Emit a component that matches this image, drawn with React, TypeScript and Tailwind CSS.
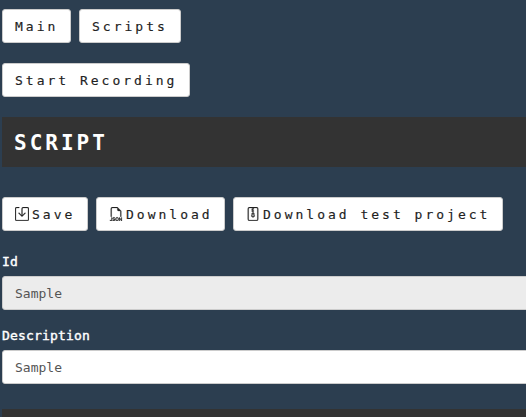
import type { ReactNode } from "react";
import { BsSave, BsFiletypeJson, BsFileZip } from "react-icons/bs";

function Button({ width, icon, children }: { width: string; icon?: ReactNode; children: ReactNode }) {
  return (
    <button
      className={`flex h-[34px] shrink-0 items-center rounded-[3px] border border-[#ccc] bg-white px-3 text-[13px] tracking-[3px] whitespace-pre text-[#222] ${width}`}
    >
      {icon}
      <span className="pt-[2px] [-webkit-text-stroke:0.15px_#222]">{children}</span>
    </button>
  );
}

function Field({ label, value, disabled = false }: { label: string; value: string; disabled?: boolean }) {
  return (
    <div className="h-[74px]">
      <label className="block h-[25px] pt-px text-[13px] leading-5 tracking-[0.17px] text-white [-webkit-text-stroke:0.4px_#fff]">
        {label}
      </label>
      <div
        className={`flex h-[34px] w-[560px] items-center rounded-[3px] border border-[#ccc] px-3 pt-[2px] text-[13px] text-[#555] ${disabled ? "bg-[#ececec]" : "bg-white"}`}
      >
        {value}
      </div>
    </div>
  );
}

export default function App() {
  return (
    <main className="h-[417px] w-full overflow-hidden bg-[#2c3e50] pt-[9px] pl-[2px] font-['DejaVu_Sans_Mono',monospace]">
      <div className="flex gap-2">
        <Button width="w-[69px]">Main</Button>
        <Button width="w-[102px]">Scripts</Button>
      </div>
      <div className="mt-5 flex">
        <Button width="w-[188px]">Start Recording</Button>
      </div>
      <h1 className="mt-5 flex h-[50px] items-center bg-[#333] pt-[4px] pl-3 text-[21px] font-bold tracking-[3px] text-white">
        SCRIPT
      </h1>
      <div className="mt-[30px] flex gap-2">
        <Button width="w-[86px]" icon={<BsSave strokeWidth={0.3} className="mr-[3px] size-3.5 shrink-0" />}>Save</Button>
        <Button width="w-[129px]" icon={<BsFiletypeJson strokeWidth={0.3} className="mr-[3px] size-3.5 shrink-0" />}>Download</Button>
        <Button width="w-[270px]" icon={<BsFileZip strokeWidth={0.3} className="mr-[3px] size-3.5 shrink-0" />}>Download test project</Button>
      </div>
      <div className="mt-5">
        <Field label="Id" value="Sample" disabled />
        <Field label="Description" value="Sample" />
      </div>
      <div className="mt-[10px] h-[50px] bg-[#333]" />
    </main>
  );
}
